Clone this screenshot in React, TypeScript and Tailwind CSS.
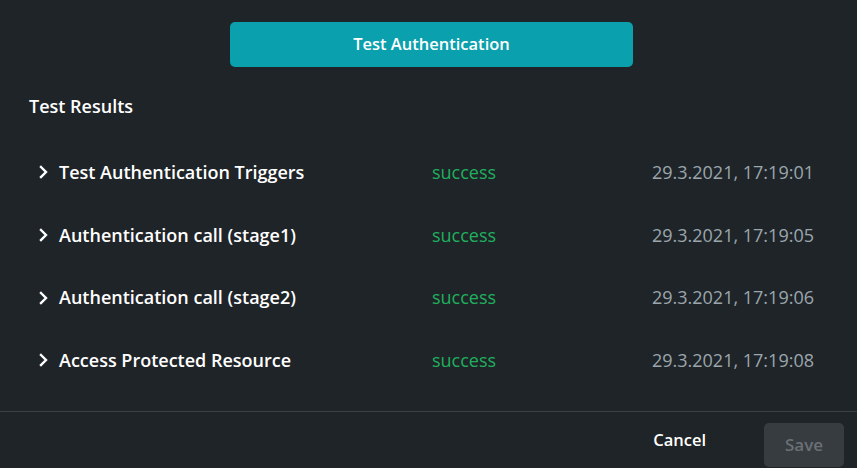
import React from "react";

const rows = [
  { title: "Test Authentication Triggers", date: "29.3.2021, 17:19:01" },
  { title: "Authentication call (stage1)", date: "29.3.2021, 17:19:05" },
  { title: "Authentication call (stage2)", date: "29.3.2021, 17:19:06" },
  { title: "Access Protected Resource", date: "29.3.2021, 17:19:08" },
];

function Chevron() {
  return (
    <svg width="10" height="14" viewBox="0 0 10 14" className="shrink-0">
      <path d="M3 2 L8 7 L3 12" stroke="#ffffff" strokeWidth="2.4" fill="none" strokeLinecap="square" />
    </svg>
  );
}

export default function App() {
  return (
    <div
      className="w-[857px] h-[468px] bg-[#1f2428] text-white flex flex-col overflow-hidden"
      style={{ fontFamily: "'Open Sans', 'Liberation Sans', sans-serif" }}
    >
      <div className="flex justify-center pt-[22px] pl-[6px]">
        <button className="w-[403px] h-[45px] rounded-[5px] bg-[#0aa0ad] text-white text-[16.5px] font-semibold">
          Test Authentication
        </button>
      </div>
      <div className="pl-[29px] pt-[28px] text-[18px] font-semibold leading-[22px]">Test Results</div>
      <div className="flex flex-col pt-[24px] pl-[38px] pr-[43px]">
        {rows.map((r, i) => (
          <div key={i} className="flex items-center h-[62.7px]">
            <div className="flex items-center gap-[11px] w-[394px]">
              <Chevron />
              <span className="text-[18px] font-semibold">{r.title}</span>
            </div>
            <span className="text-[18px] font-medium text-[#1fb05e]">success</span>
            <span className="ml-auto text-[18px] text-[#9ba6ad]">{r.date}</span>
          </div>
        ))}
      </div>
      <div className="mt-auto border-t border-[#3a4045] h-[57px] flex items-center justify-end pr-[13px]">
        <button className="text-[16.5px] font-semibold text-white mr-[58px]">Cancel</button>
        <button className="w-[80px] h-[44px] mt-[11px] self-start rounded-[5px] bg-[#373c40] text-[17px] font-semibold text-[#6a7075]">
          Save
        </button>
      </div>
    </div>
  );
}
